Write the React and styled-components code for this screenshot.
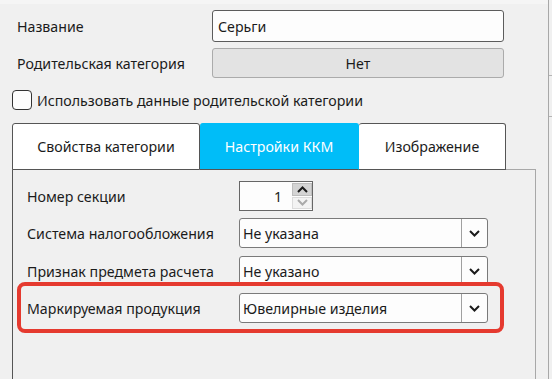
import React from 'react';
import styled, { createGlobalStyle } from 'styled-components';

const GlobalStyle = createGlobalStyle`
  body {
    margin: 0;
    background: #f0f0f0;
    font-family: "Noto Sans", "Open Sans", sans-serif;
    font-size: 14.2px;
    color: #1b1b1b;
  }
`;

const Window = styled.div`
  display: flex;
  width: 552px;
  height: 379px;
  overflow: hidden;
  background: #f0f0f0;
`;

const Main = styled.div`
  width: 548px;
  display: flex;
  flex-direction: column;
`;

const TopStrip = styled.div`
  height: 4px;
  background: #f5f5f5;
`;

const SideEdge = styled.div`
  width: 3px;
  border-left: 1px solid #a8a8a8;
  display: flex;
  flex-direction: column;
`;

const EdgeTick = styled.div`
  height: ${p => p.h}px;
  border-bottom: ${p => (p.line ? '1px solid #b5b5b5' : 'none')};
`;

const Form = styled.div`
  display: flex;
  flex-direction: column;
  padding-top: 6px;
`;

const FieldRow = styled.div`
  display: grid;
  grid-template-columns: 195px 292px;
  align-items: center;
  padding-left: 17px;
  margin-bottom: ${p => p.mb || 0}px;
`;

const Label = styled.span`
  white-space: nowrap;
`;

const TextInput = styled.div`
  height: 32px;
  box-sizing: border-box;
  border: 1px solid #5c5c5c;
  border-radius: 3px;
  background: #fdfdfd;
  display: flex;
  align-items: center;
  padding-left: 5px;
`;

const Button = styled.div`
  height: 30px;
  box-sizing: border-box;
  border: 1px solid #ababab;
  border-radius: 3px;
  background: #e3e3e3;
  display: flex;
  align-items: center;
  justify-content: center;
`;

const CheckRow = styled.label`
  display: flex;
  align-items: center;
  gap: 5px;
  padding-left: 12px;
  margin-top: 12px;
  height: 20px;
`;

const CheckBox = styled.span`
  width: 20px;
  height: 20px;
  box-sizing: border-box;
  border: 1px solid #333;
  border-radius: 4px;
  background: #fdfdfd;
`;

const TabWidget = styled.div`
  margin: 13px 0 0 12px;
  width: 524px;
  display: flex;
  flex-direction: column;
  flex: 1;
`;

const TabBar = styled.div`
  display: flex;
  height: 47px;
  margin-bottom: -1px;
`;

const Tab = styled.div`
  position: relative;
  width: ${p => p.w}px;
  box-sizing: border-box;
  display: flex;
  align-items: center;
  justify-content: center;
  border: 1px solid #555;
  border-left-width: ${p => (p.noLeft ? 0 : 1)}px;
  border-radius: 3px 3px 0 0;
  background: ${p => (p.active ? '#00bdf8' : '#fff')};
  color: ${p => (p.active ? '#fff' : '#1b1b1b')};
  border-color: ${p => (p.active ? '#00bdf8 #00bdf8 #555 #555' : '#555')};
`;

const Pane = styled.div`
  flex: 1;
  border: 1px solid #a8a8a8;
  border-left-color: #555;
  border-bottom: none;
  padding: 11px 0 0 14px;
  display: flex;
  flex-direction: column;
  gap: 7px;
`;

const PaneRow = styled.div`
  position: relative;
  display: grid;
  grid-template-columns: 212px 249px;
  width: 461px;
  align-items: center;
  height: 30px;
  margin-top: ${p => p.mt || 0}px;

  ${p =>
    p.marked &&
    `
    &::after {
      content: '';
      position: absolute;
      top: -11px;
      bottom: -10px;
      left: -10px;
      right: -16px;
      border: 4px solid #e53a2f;
      border-radius: 8px;
      pointer-events: none;
    }
  `}
`;

const Spinner = styled.div`
  width: 74px;
  height: 30px;
  box-sizing: border-box;
  border: 1px solid #666;
  background: #fdfdfd;
  display: flex;
`;

const SpinValue = styled.div`
  flex: 1;
  display: flex;
  align-items: center;
  justify-content: flex-end;
  padding-right: 10px;
`;

const SpinButtons = styled.div`
  width: 20px;
  display: flex;
  flex-direction: column;
  gap: 1px;
  padding: 1px 0;
`;

const SpinButton = styled.div`
  flex: 1;
  display: flex;
  align-items: center;
  justify-content: center;
  background: ${p => (p.active ? '#d4d4d4' : '#f3f3f3')};
  border: 1px solid ${p => (p.active ? '#bdbdbd' : '#dcdcdc')};
`;

const Select = styled.div`
  width: 249px;
  height: 30px;
  box-sizing: border-box;
  border: 1px solid #7a7a7a;
  border-radius: 3px;
  background: #fdfdfd;
  display: flex;
`;

const SelectValue = styled.div`
  flex: 1;
  display: flex;
  align-items: center;
  padding-left: 3px;
`;

const SelectArrow = styled.div`
  width: 25px;
  border-left: 1px solid #a0a0a0;
  display: flex;
  align-items: center;
  justify-content: center;
`;

const Chevron = ({ up, color = '#1b1b1b' }) => (
  <svg width="11" height="7" viewBox="0 0 11 7">
    <path
      d={up ? 'M1 6 L5.5 1.5 L10 6' : 'M1 1 L5.5 5.5 L10 1'}
      fill="none"
      stroke={color}
      strokeWidth="2"
    />
  </svg>
);

const Dropdown = ({ value }) => (
  <Select>
    <SelectValue>{value}</SelectValue>
    <SelectArrow>
      <Chevron />
    </SelectArrow>
  </Select>
);

const App = () => (
  <>
    <GlobalStyle />
    <Window>
      <Main>
        <TopStrip />
        <Form>
          <FieldRow mb={6}>
            <Label>Название</Label>
            <TextInput>Серьги</TextInput>
          </FieldRow>
          <FieldRow>
            <Label>Родительская категория</Label>
            <Button>Нет</Button>
          </FieldRow>
          <CheckRow>
            <CheckBox />
            <span>Использовать данные родительской категории</span>
          </CheckRow>
        </Form>
        <TabWidget>
          <TabBar>
            <Tab w={188}>Свойства категории</Tab>
            <Tab w={159} active noLeft>
              Настройки ККМ
            </Tab>
            <Tab w={147} noLeft>
              Изображение
            </Tab>
          </TabBar>
          <Pane>
            <PaneRow>
              <Label>Номер секции</Label>
              <Spinner>
                <SpinValue>1</SpinValue>
                <SpinButtons>
                  <SpinButton active>
                    <Chevron up />
                  </SpinButton>
                  <SpinButton>
                    <Chevron color="#aaa" />
                  </SpinButton>
                </SpinButtons>
              </Spinner>
            </PaneRow>
            <PaneRow>
              <Label>Система налогообложения</Label>
              <Dropdown value="Не указана" />
            </PaneRow>
            <PaneRow mt={1}>
              <Label>Признак предмета расчета</Label>
              <Dropdown value="Не указано" />
            </PaneRow>
            <PaneRow marked>
              <Label>Маркируемая продукция</Label>
              <Dropdown value="Ювелирные изделия" />
            </PaneRow>
          </Pane>
        </TabWidget>
      </Main>
      <SideEdge>
        <EdgeTick h={75} line />
        <EdgeTick h={40} line />
      </SideEdge>
    </Window>
  </>
);

export default App;
